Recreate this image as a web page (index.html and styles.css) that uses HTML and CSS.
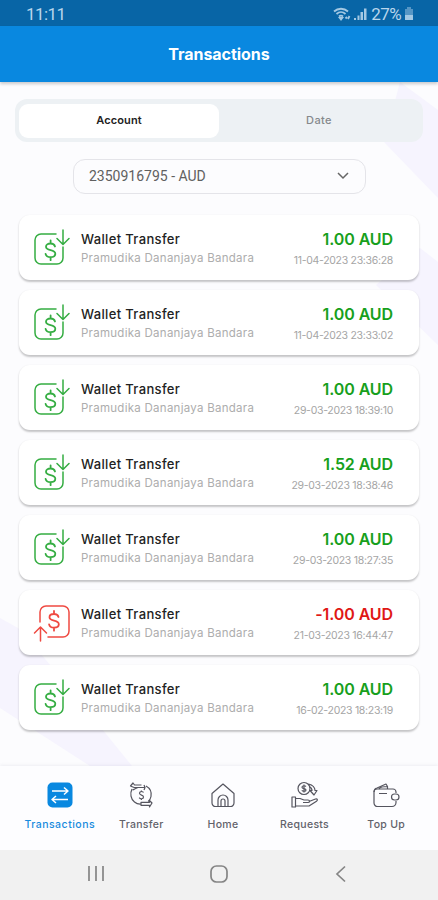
FILE: index.html
```
<!DOCTYPE html>
<html lang="en">
  <head>
    <meta charset="UTF-8" />
    <meta name="viewport" content="width=device-width, initial-scale=1" />
    <title>Transactions</title>
    <link rel="stylesheet" href="styles.css">
  </head>
  <body>
    <!-- Shared icons -->
    <svg class="sprite">
      <symbol id="icon-in" viewBox="0 0 38 38">
        <path d="M24 5H9a6 6 0 0 0-6 6v18a6 6 0 0 0 6 6h16a6 6 0 0 0 6-6V18" />
        <path d="M31 1v14M25 9.500l6 6 6-6" />
        <path class="dollar" transform="translate(1 1)" d="M22 16.500c-.5-2-2.200-3-4.500-3-2.700 0-4.500 1.200-4.500 3.300 0 4.800 9.300 2 9.300 7 0 2.200-2 3.400-4.800 3.400-2.700 0-4.500-1.200-4.900-3.300M17.600 10.500v3M17.600 27.200v3" />
      </symbol>
      <symbol id="icon-out" viewBox="0 0 38 38">
        <path d="M8 18V8a6 6 0 0 1 6-6h17a6 6 0 0 1 6 6v19a6 6 0 0 1-6 6H16" />
        <path d="M8.500 37V23M2.500 29l6-6 6 6" />
        <path class="dollar" transform="translate(0 -2)" d="M26.500 15c-.5-2-2.200-3-4.500-3-2.700 0-4.500 1.200-4.500 3.300 0 4.800 9.300 2 9.300 7 0 2.200-2 3.400-4.800 3.400-2.700 0-4.500-1.200-4.900-3.300M22 9v3M22 25.700v3" />
      </symbol>
    </svg>

    <div class="status-bar">
      <span class="clock">11:11</span>
      <div class="status-right">
        <svg class="wifi" width="18" height="14" viewBox="0 0 18 14">
          <path d="M1 4.500c4-3.700 10-3.700 14 0M3.500 7c2.600-2.400 6.400-2.400 9 0M6 9.500c1.200-1.100 2.800-1.100 4 0" />
          <path d="M8 12.500l-1.200-1.500h2.400zM12.500 11.500l1.500-1.500M15 12l1.500-3" />
        </svg>
        <svg width="13" height="14" viewBox="0 0 13 14">
          <path d="M0 11h2v2H0zM3.500 8.500h2V13h-2zM6.500 5h2.500v8H6.500zM10 1.500h2.500V13H10z" />
        </svg>
        <span class="percent">27%</span>
        <svg width="10" height="14" viewBox="0 0 10 14">
          <path d="M3 0h4v2h2v7H1V2h2z" opacity=".5" />
          <path d="M1 8h8v5H1z" />
        </svg>
      </div>
    </div>

    <header>Transactions</header>

    <main>
      <svg class="backdrop" viewBox="0 0 438 684">
        <path d="M400 0l38 28v88l-54-56z" />
        <path d="M420 166l18 14v83l-62-60z" />
        <path d="M0 536l18 10 28 32 86 106H90L0 626z" />
      </svg>

      <div class="tabs">
        <div class="tab active">Account</div>
        <div class="tab">Date</div>
      </div>

      <div class="account">
        <span>2350916795 - AUD</span>
        <svg width="12" height="8" viewBox="0 0 12 8"><path d="M1 1l5 5 5-5" /></svg>
      </div>

      <div class="list" id="list">
        <!-- Rows are added by the script -->
      </div>
    </main>

    <nav>
      <div class="nav-item active">
        <svg viewBox="0 0 28 28">
          <rect class="tile" x="1.500" y="1.500" width="25" height="25" rx="5" />
          <path d="M6 10h16M18 6.500l4 3.500-4 3.500M22 18.500H6M10 15l-4 3.500 4 3.500" />
        </svg>
        <span>Transactions</span>
      </div>
      <div class="nav-item">
        <svg viewBox="0 0 28 28">
          <path d="M7 6.500h11l-1-2.500M18 6.500l-1 2.500M7 6.500L3.500 5 6 2l1.500 2h7" />
          <path d="M19 5c4 2.200 5.800 6 5 10.500-.4 2-1.300 3.700-2.800 5M5 8c-2.200 4.500-1.300 10 2.500 13 2 1.600 4.300 2.200 6.500 2" />
          <path d="M5.500 9c2.500-1 3-2 5-2M25 22l-2.500-2.500v1.800H14v3h8.500V26z" />
          <path d="M16.500 11.500c-1-1.500-4-1.300-4 .8 0 2.200 4 1.500 4 3.700 0 2.200-3.300 2.300-4.300.6M14.400 9.500v1M14.400 18v1" />
        </svg>
        <span>Transfer</span>
      </div>
      <div class="nav-item">
        <svg viewBox="0 0 28 28">
          <path d="M3 12.500L14 3l11 9.500V22a3.500 3.500 0 0 1-3.500 3.500h-15A3.500 3.500 0 0 1 3 22z" />
          <path d="M9 25.500V19a5 5 0 0 1 10 0v6.500M12 25.500V20a2 2 0 0 1 4 0v5.500" />
        </svg>
        <span>Home</span>
      </div>
      <div class="nav-item">
        <svg viewBox="0 0 28 28">
          <circle cx="13" cy="7.500" r="6" />
          <path d="M15 5.500c-1-1.200-4-1-4 .7s4 1 4 2.700-3.200 1.800-4.200.5M13 3.500v8" />
          <path d="M17.500 3c4 1 6.500 3 6.500 6.500h2L23 14l-4-4.500h2c0-2-1-3-2.500-3.500" />
          <path d="M1 16h3.500v10H1zM4.500 17.500H9l4 1.500h4c2 0 2 2.500 0 2.500h-5M18 20.500l6.500-2.500c2-.5 2.500 1.200 1 2.200L18 25H4.500" />
        </svg>
        <span>Requests</span>
      </div>
      <div class="nav-item">
        <svg viewBox="0 0 28 28">
          <path d="M24 12v-1a3 3 0 0 0-3-3H5a3 3 0 0 0-3 3v11a3.500 3.500 0 0 0 3.500 3.500H20a4 4 0 0 0 4-4V20" />
          <path d="M2 11c0-2 1-3.500 3-4l9-4 1.500 2.500V8M7 8c1-2 3-2.500 8.500-2.500M7 12.500h8" />
          <path d="M24 13h-1.500a3 3 0 0 0 0 6H24a3 3 0 0 0 0-6z" />
        </svg>
        <span>Top Up</span>
      </div>
    </nav>

    <div class="system-nav">
      <svg viewBox="0 0 20 20"><path d="M3 2v15M10 2v15M17 2v15" /></svg>
      <svg viewBox="0 0 20 20"><rect x="2" y="2" width="16" height="16" rx="5.500" /></svg>
      <svg viewBox="0 0 20 20"><path d="M14 2.500l-8 7.500 8 7.500" /></svg>
    </div>

    <script>
      const transactions = [
        { amount: "1.00", date: "11-04-2023 23:36:28" },
        { amount: "1.00", date: "11-04-2023 23:33:02" },
        { amount: "1.00", date: "29-03-2023 18:39:10" },
        { amount: "1.52", date: "29-03-2023 18:38:46" },
        { amount: "1.00", date: "29-03-2023 18:27:35" },
        { amount: "-1.00", date: "21-03-2023 16:44:47" },
        { amount: "1.00", date: "16-02-2023 18:23:19" },
      ];

      const list = document.getElementById("list");
      transactions.forEach((t) => {
        const type = t.amount.startsWith("-") ? "out" : "in";
        const card = document.createElement("div");
        card.className = `card ${type}`;
        card.innerHTML = `
          <svg class="card-icon"><use href="#icon-${type}" /></svg>
          <div class="info">
            <div class="title">Wallet Transfer</div>
            <div class="name">Pramudika Dananjaya Bandara</div>
          </div>
          <div class="value">
            <div class="amount">${t.amount} AUD</div>
            <div class="date">${t.date}</div>
          </div>
        `;
        list.appendChild(card);
      });
    </script>
  </body>
</html>
```
FILE: styles.css
```
* {
  box-sizing: border-box;
}
body {
  margin: 0;
  height: 900px;
  display: flex;
  flex-direction: column;
  overflow: hidden;
  font-family: Inter, "Liberation Sans", sans-serif;
  background: #fcfcfe;
  white-space: nowrap;
}
svg {
  display: block;
  fill: none;
  flex-shrink: 0;
}
.sprite {
  position: absolute;
  width: 0;
  height: 0;
}
.status-bar {
  height: 26px;
  padding: 1px 24px 0 26px;
  display: flex;
  align-items: center;
  justify-content: space-between;
  background: #0865a6;
  color: #b9d6ec;
  font-family: Roboto, sans-serif;
  font-size: 17px;
  line-height: 24px;
}
.clock {
  letter-spacing: -0.6px;
}
.status-right {
  display: flex;
  align-items: center;
  gap: 3px;
}
.status-right svg {
  fill: #a3c8e3;
}
.status-right .wifi {
  fill: none;
  stroke: #a3c8e3;
  stroke-width: 1.8;
}
.percent {
  letter-spacing: -0.6px;
  margin-left: 1px;
}
header {
  height: 56px;
  flex-shrink: 0;
  z-index: 1;
  background: #0988e0;
  color: #fff;
  font-size: 16px;
  font-weight: 700;
  line-height: 57px;
  letter-spacing: -0.05px;
  text-align: center;
  box-shadow: 0 2px 3px rgba(0, 0, 0, 0.2);
}
main {
  position: relative;
  height: 684px;
  padding: 17px 15px 0;
}
.backdrop {
  position: absolute;
  top: 0;
  left: 0;
  width: 438px;
  height: 684px;
  z-index: -1;
  fill: #f6f4fe;
}
.tabs {
  display: flex;
  height: 43px;
  padding: 5px 4px 4px;
  border-radius: 12px;
  background: #edf1f4;
}
.tab {
  width: 200px;
  border-radius: 9px;
  color: #85898c;
  font-size: 11px;
  font-weight: 500;
  letter-spacing: 0.4px;
  line-height: 33px;
  text-align: center;
}
.tab.active {
  background: #fff;
  color: #222;
  font-weight: 600;
  letter-spacing: 0.1px;
}
.account {
  display: flex;
  align-items: center;
  justify-content: space-between;
  width: 293px;
  height: 35px;
  margin: 17px 0 0 58px;
  padding: 0 16px 2px 15px;
  border: 1px solid #e4e4e9;
  border-radius: 12px;
  color: #606060;
  font-family: Roboto, sans-serif;
  font-size: 14px;
}
.account svg {
  stroke: #666;
  stroke-width: 1.5;
}
.list {
  display: flex;
  flex-direction: column;
  gap: 10px;
  margin: 21px 4px 0;
}
.card {
  display: flex;
  height: 65px;
  padding: 0 26px 0 13px;
  border-radius: 11px;
  background: #fff;
  box-shadow: 0 1.5px 2px rgba(0, 0, 0, 0.22);
}
.card-icon {
  width: 38px;
  height: 38px;
  margin-top: 14px;
  stroke-width: 1.5;
  stroke-linecap: round;
  stroke-linejoin: round;
}
.dollar {
  stroke-width: 1.8;
}
.in .card-icon {
  stroke: #35ad42;
}
.out .card-icon {
  stroke: #ef4a42;
}
.info {
  flex: 1;
  padding: 15px 0 0 11px;
}
.title {
  color: #222;
  font-size: 13px;
  font-weight: 500;
  letter-spacing: 0.35px;
  line-height: 18px;
}
.name {
  color: #adadad;
  font-size: 11.5px;
  letter-spacing: 0.27px;
  line-height: 20px;
}
.value {
  padding-top: 14px;
  text-align: right;
}
.amount {
  color: #17a01c;
  font-size: 16px;
  font-weight: 600;
  letter-spacing: -0.1px;
  line-height: 20px;
}
.out .amount {
  color: #e01815;
}
.date {
  color: #a5a5a5;
  font-size: 10.5px;
  letter-spacing: -0.3px;
  line-height: 23px;
}
nav {
  display: flex;
  height: 84px;
  flex-shrink: 0;
  padding: 15px 11px 0 19px;
  background: #fdfdff;
  box-shadow: 0 -1px 3px rgba(80, 80, 120, 0.08);
}
.nav-item {
  flex: 1;
  display: flex;
  flex-direction: column;
  align-items: center;
  color: #62626a;
  font-size: 10.5px;
  font-weight: 500;
  letter-spacing: 0.3px;
  line-height: 14px;
}
.nav-item svg {
  width: 28px;
  height: 28px;
  margin-bottom: 9px;
  stroke: #55555f;
  stroke-width: 1.2;
  stroke-linejoin: round;
}
.nav-item.active {
  color: #188bdd;
  letter-spacing: 0.5px;
}
.nav-item.active svg {
  stroke: #fff;
  stroke-width: 1.5;
}
.nav-item .tile {
  fill: #0988e0;
  stroke: none;
}
.system-nav {
  display: flex;
  justify-content: space-between;
  align-items: center;
  height: 50px;
  flex-shrink: 0;
  padding: 0 87px 2px 86px;
  background: #f1f1f1;
}
.system-nav svg {
  width: 20px;
  height: 20px;
  stroke: #858585;
  stroke-width: 1.7;
}
```
